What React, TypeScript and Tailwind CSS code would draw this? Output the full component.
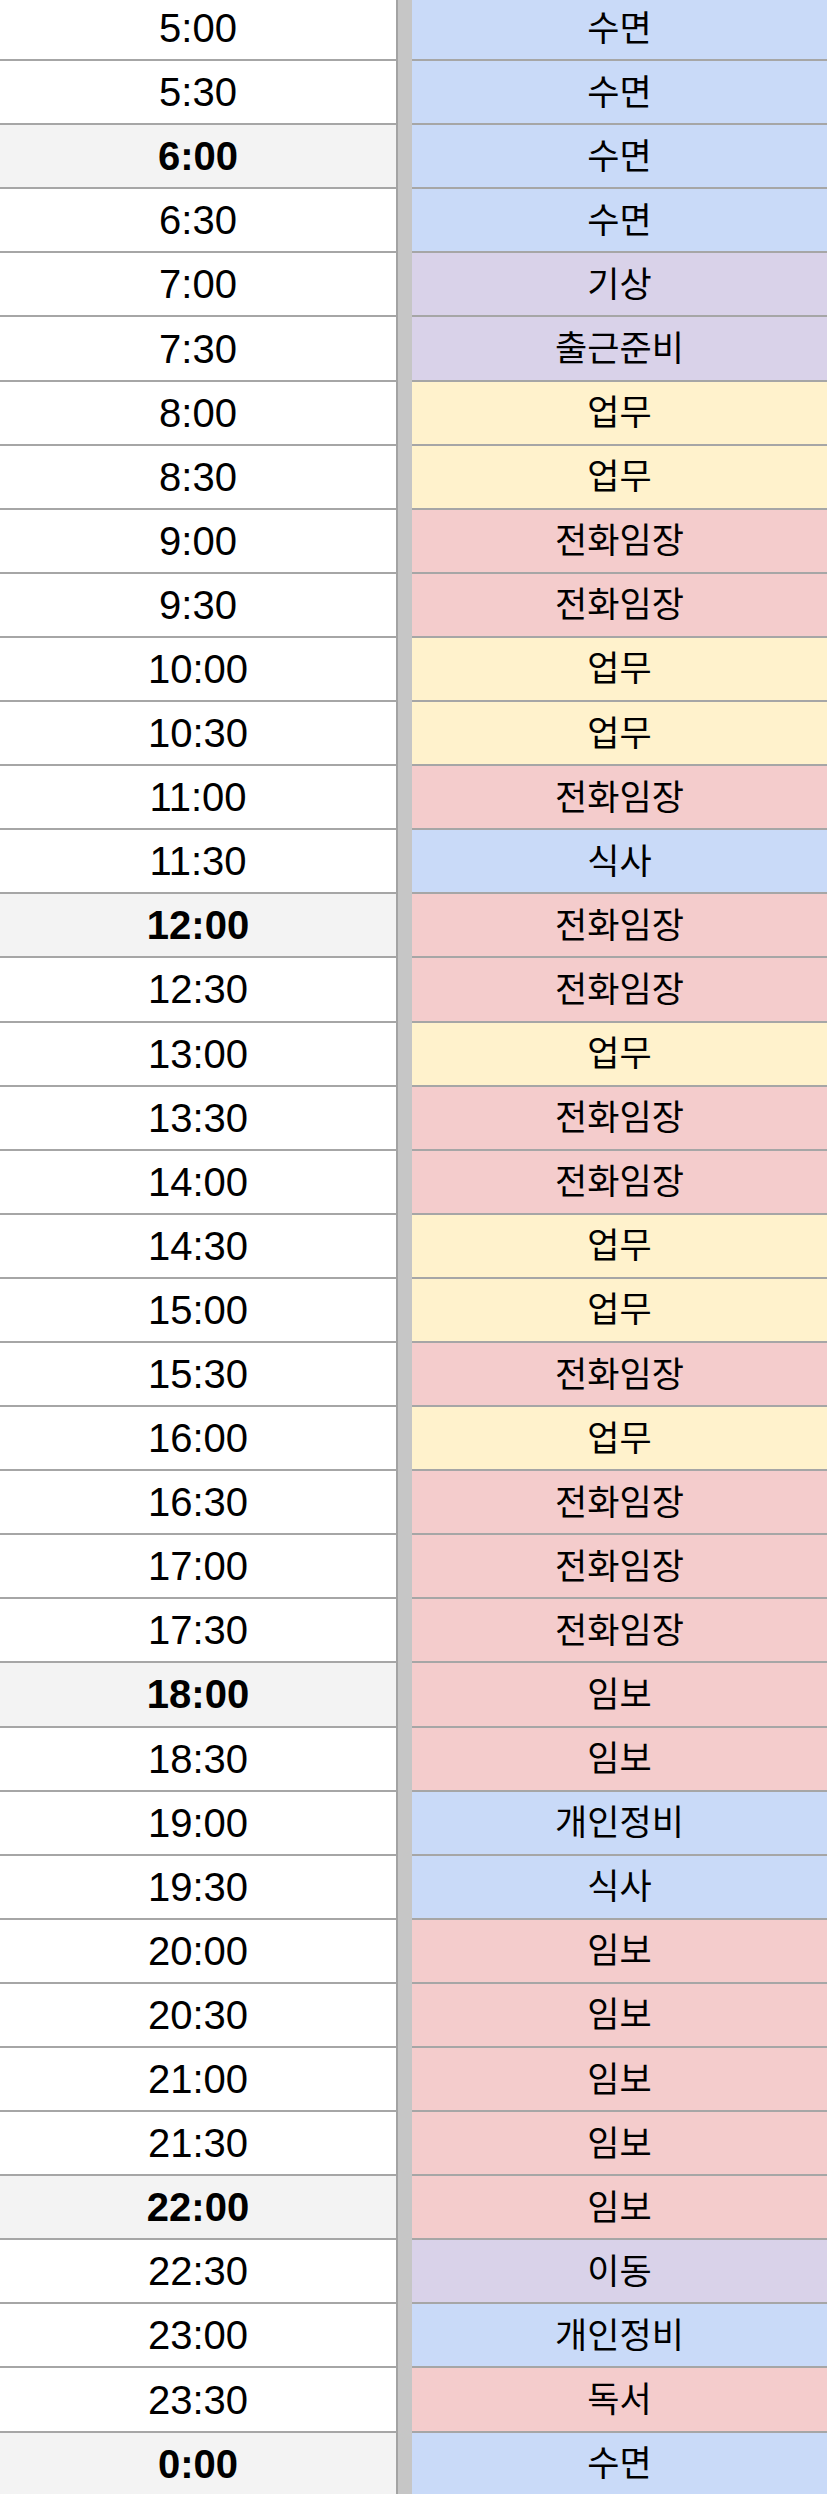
import React from 'react';

type Kind = 'blue' | 'purple' | 'yellow' | 'pink';

interface Slot {
    time: string;
    task: string;
    kind: Kind;
}

const slots: Slot[] = [
    { time: '5:00', task: '수면', kind: 'blue' },
    { time: '5:30', task: '수면', kind: 'blue' },
    { time: '6:00', task: '수면', kind: 'blue' },
    { time: '6:30', task: '수면', kind: 'blue' },
    { time: '7:00', task: '기상', kind: 'purple' },
    { time: '7:30', task: '출근준비', kind: 'purple' },
    { time: '8:00', task: '업무', kind: 'yellow' },
    { time: '8:30', task: '업무', kind: 'yellow' },
    { time: '9:00', task: '전화임장', kind: 'pink' },
    { time: '9:30', task: '전화임장', kind: 'pink' },
    { time: '10:00', task: '업무', kind: 'yellow' },
    { time: '10:30', task: '업무', kind: 'yellow' },
    { time: '11:00', task: '전화임장', kind: 'pink' },
    { time: '11:30', task: '식사', kind: 'blue' },
    { time: '12:00', task: '전화임장', kind: 'pink' },
    { time: '12:30', task: '전화임장', kind: 'pink' },
    { time: '13:00', task: '업무', kind: 'yellow' },
    { time: '13:30', task: '전화임장', kind: 'pink' },
    { time: '14:00', task: '전화임장', kind: 'pink' },
    { time: '14:30', task: '업무', kind: 'yellow' },
    { time: '15:00', task: '업무', kind: 'yellow' },
    { time: '15:30', task: '전화임장', kind: 'pink' },
    { time: '16:00', task: '업무', kind: 'yellow' },
    { time: '16:30', task: '전화임장', kind: 'pink' },
    { time: '17:00', task: '전화임장', kind: 'pink' },
    { time: '17:30', task: '전화임장', kind: 'pink' },
    { time: '18:00', task: '임보', kind: 'pink' },
    { time: '18:30', task: '임보', kind: 'pink' },
    { time: '19:00', task: '개인정비', kind: 'blue' },
    { time: '19:30', task: '식사', kind: 'blue' },
    { time: '20:00', task: '임보', kind: 'pink' },
    { time: '20:30', task: '임보', kind: 'pink' },
    { time: '21:00', task: '임보', kind: 'pink' },
    { time: '21:30', task: '임보', kind: 'pink' },
    { time: '22:00', task: '임보', kind: 'pink' },
    { time: '22:30', task: '이동', kind: 'purple' },
    { time: '23:00', task: '개인정비', kind: 'blue' },
    { time: '23:30', task: '독서', kind: 'pink' },
    { time: '0:00', task: '수면', kind: 'blue' },
];

// times that get the bold, grey-filled label
const marked = ['6:00', '12:00', '18:00', '22:00', '0:00'];

const fills: Record<Kind, string> = {
    blue: 'bg-[#c9daf8]',
    purple: 'bg-[#d9d2e9]',
    yellow: 'bg-[#fff2cc]',
    pink: 'bg-[#f4cccc]',
};

const Row: React.FC<{ slot: Slot }> = ({ slot }) => {
    const bold = marked.includes(slot.time);
    return (
        <div className="flex">
            <div
                className={`w-[396px] h-[64.1px] flex items-center justify-center border-b-2 border-[#a6a6a6] text-[40px] leading-none text-black ${
                    bold ? 'bg-[#f3f3f3] font-bold' : 'bg-white'
                }`}
            >
                {slot.time}
            </div>
            <div className="w-[16px] border-l-2 border-[#a3a3a3] bg-[#c6c6c6]" />
            <div
                className={`flex-1 h-[64.1px] flex items-center justify-center border-b-2 border-[#a6a6a6] text-[35px] leading-none text-black ${fills[slot.kind]}`}
            >
                {slot.task}
            </div>
        </div>
    );
};

const App: React.FC = () => {
    return (
        <div
            className="w-[827px] h-[2494px] overflow-hidden bg-white"
            style={{ fontFamily: "'Liberation Sans', 'Noto Sans CJK KR', sans-serif" }}
        >
            <div className="-mt-[3px] flex flex-col">
                {slots.map((s) => (
                    <Row key={s.time} slot={s} />
                ))}
            </div>
        </div>
    );
};

export default App;
